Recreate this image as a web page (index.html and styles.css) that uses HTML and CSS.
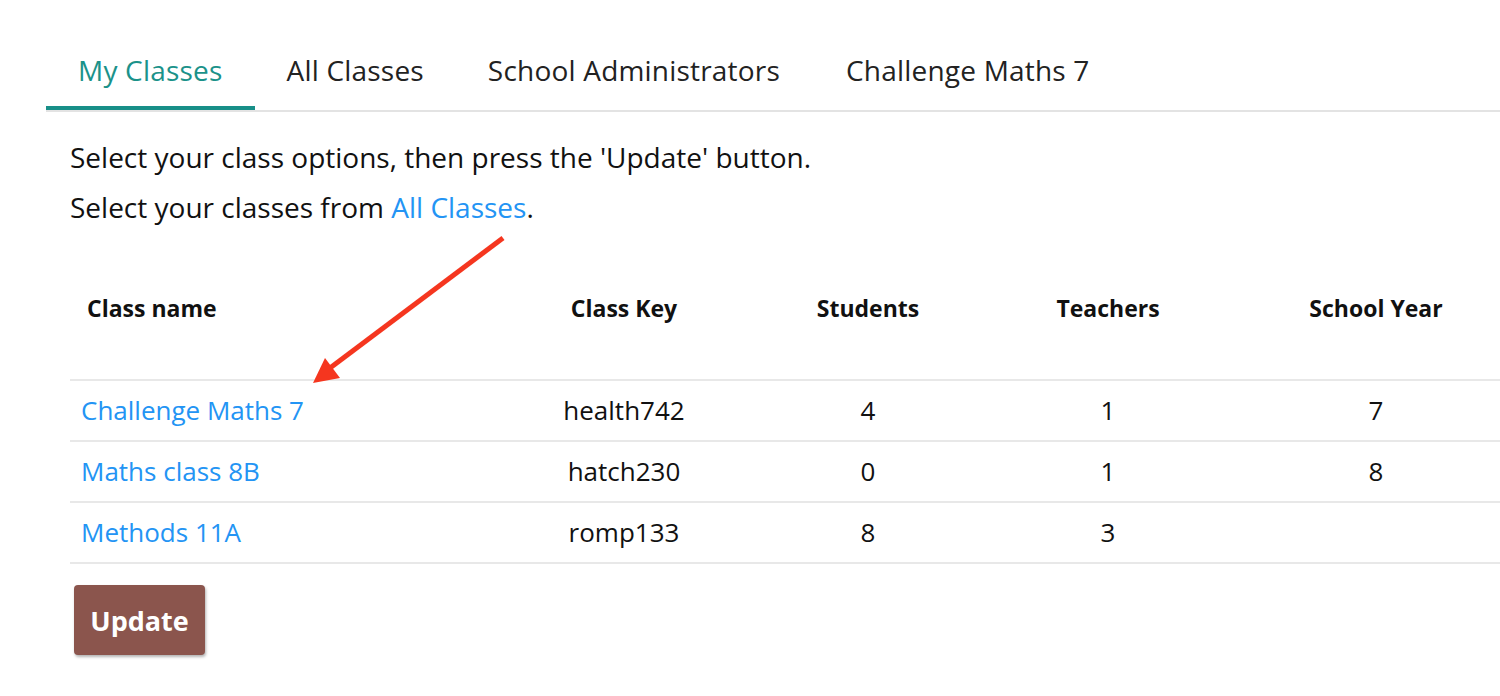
FILE: index.html
```html
<!DOCTYPE html>
<html lang="en">
<head>
<meta charset="utf-8">
<title>My Classes</title>
<link rel="stylesheet" href="styles.css">
</head>
<body>
<div class="page">
  <nav class="tabs">
    <a class="tab active" href="#">My Classes</a>
    <a class="tab" href="#">All Classes</a>
    <a class="tab" href="#">School Administrators</a>
    <a class="tab" href="#">Challenge Maths 7</a>
  </nav>
  <div class="content">
    <p class="line">Select your class options, then press the 'Update' button.</p>
    <p class="line">Select your classes from <a class="link" href="#">All Classes</a>.</p>
    <table class="classes">
      <thead>
        <tr>
          <th class="c-name">Class name</th>
          <th class="c-key">Class Key</th>
          <th class="c-students">Students</th>
          <th class="c-teachers">Teachers</th>
          <th class="c-year">School Year</th>
        </tr>
      </thead>
      <tbody>
        <tr>
          <td class="c-name"><a class="link" href="#">Challenge Maths 7</a></td>
          <td>health742</td>
          <td>4</td>
          <td>1</td>
          <td>7</td>
        </tr>
        <tr>
          <td class="c-name"><a class="link" href="#">Maths class 8B</a></td>
          <td>hatch230</td>
          <td>0</td>
          <td>1</td>
          <td>8</td>
        </tr>
        <tr>
          <td class="c-name"><a class="link" href="#">Methods 11A</a></td>
          <td>romp133</td>
          <td>8</td>
          <td>3</td>
          <td></td>
        </tr>
      </tbody>
    </table>
    <button class="update" type="button">Update</button>
  </div>
  <svg class="arrow" width="240" height="170" viewBox="0 0 240 170" aria-hidden="true">
    <line x1="213" y1="8" x2="40" y2="138" stroke="#f5361f" stroke-width="5" stroke-linecap="butt"/>
    <polygon points="23,153 35,128 50,148" fill="#f5361f"/>
  </svg>
</div>
</body>
</html>
```

FILE: styles.css
```css
html, body {
  margin: 0;
  padding: 0;
  background: #ffffff;
  overflow: hidden;
}

.page {
  position: relative;
  width: 1500px;
  height: 696px;
  overflow: hidden;
  font-family: "Open Sans", "Liberation Sans", sans-serif;
  color: #111111;
}

.tabs {
  display: flex;
  margin: 35px 0 0 46px;
  border-bottom: 2px solid #e3e3e3;
}

.tab {
  display: block;
  padding: 17px 32px 18px 32px;
  font-size: 28px;
  line-height: 36px;
  letter-spacing: 0.2px;
  color: #222222;
  text-decoration: none;
  border-bottom: 4px solid transparent;
}

.tab:nth-child(3) {
  padding-right: 33px;
}

.tab:nth-child(4) {
  padding-left: 33px;
}

.tab.active {
  color: #1b928a;
  border-bottom-color: #188f88;
}

.content {
  padding: 20px 0 0 70px;
}

.line {
  margin: 0;
  font-size: 28px;
  line-height: 50px;
}

.link {
  color: #2394f4;
  text-decoration: none;
}

.classes {
  border-collapse: collapse;
  margin-top: 30px;
  width: 1456px;
  table-layout: fixed;
}

.classes th,
.classes td {
  box-sizing: border-box;
}

.classes th {
  font-size: 23px;
  font-weight: 700;
  line-height: 30px;
  padding: 31px 0 56px;
  text-align: center;
  border-bottom: 2px solid #e8e8e8;
  color: #111111;
}

.classes td {
  font-size: 26px;
  line-height: 30px;
  padding: 14px 0 15px;
  text-align: center;
  border-bottom: 2px solid #e8e8e8;
}

.classes .c-name {
  width: 432px;
  text-align: left;
}

.classes th.c-name {
  padding-left: 17px;
}

.classes td.c-name {
  padding-left: 11px;
}

.classes .c-key { width: 244px; }
.classes .c-students { width: 244px; }
.classes .c-teachers { width: 236px; }
.classes .c-year { width: 300px; }

.update {
  display: block;
  margin: 21px 0 0 4px;
  width: 131px;
  height: 70px;
  padding: 0;
  border: none;
  border-radius: 4px;
  background: #8b554d;
  color: #ffffff;
  font-family: "Open Sans", "Liberation Sans", sans-serif;
  font-size: 27px;
  font-weight: 700;
  box-shadow: 1px 2px 3px rgba(0, 0, 0, 0.3);
  cursor: pointer;
}

.arrow {
  position: absolute;
  left: 290px;
  top: 230px;
}
```
